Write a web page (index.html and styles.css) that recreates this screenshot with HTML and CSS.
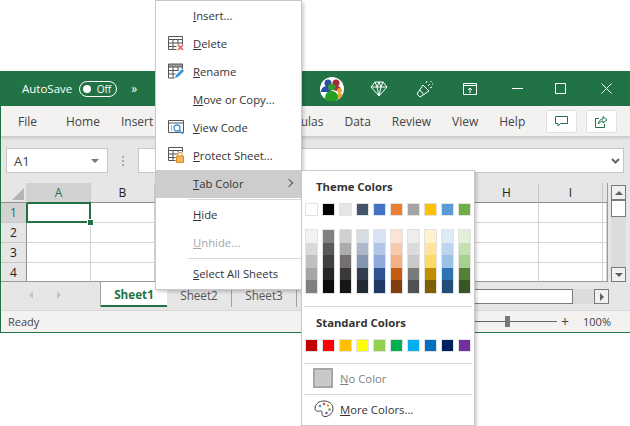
FILE: index.html
```html
<!DOCTYPE html>
<html>

<head lang="en">
    <meta charset="UTF-8">
    <title>Tab Color</title>
    <link rel="stylesheet" href="styles.css">
</head>

<body>
    <div class="window">
        <!-- title bar -->
        <div class="title-bar">
            <span class="autosave">AutoSave</span>
            <span class="toggle"><i class="toggle-dot"></i>Off</span>
            <span class="more">»</span>
            <svg class="avatar" width="24" height="24" viewBox="0 0 24 24">
                <circle cx="12" cy="12" r="12" fill="#fff"/>
                <circle cx="8" cy="6" r="3.500" fill="#2b4ea0"/>
                <circle cx="16" cy="6" r="3.500" fill="#a82a3a"/>
                <path d="M1 15c0-4 3-6 6-6s4 2 4 6z" fill="#2b4ea0"/>
                <path d="M13 13c0-3 2-4 4-4s4 1 4 4l-4 1z" fill="#a82a3a"/>
                <circle cx="19.500" cy="13.500" r="2.500" fill="#eaa52c"/>
                <path d="M16 21c0-3 2-5 3.500-5s3 1 3 3l-3 3z" fill="#eaa52c"/>
                <circle cx="11.500" cy="10" r="3.500" fill="#2f9e2f"/>
                <path d="M5 22c0-6 3-8 6.500-8s6.500 2 6.500 8l-3 2H8z" fill="#23a023"/>
            </svg>
            <svg class="title-icon diamond" width="18" height="16" viewBox="0 0 18 16" fill="none" stroke="#fff">
                <path d="M5 1h8l4 5-8 9-8-9zM1 6h16M5 1l2 5 2 9 2-9 2-5M7 6l2-5 2 5"/>
            </svg>
            <svg class="title-icon wand" width="18" height="18" viewBox="0 0 18 18" fill="none" stroke="#fff">
                <path d="M1 14l6-9 6 6-9 6zM4 10l4 5M12 6l2-2M10 3l1-2M14 8l2-1M15 1v1M17 4h-1"/>
            </svg>
            <svg class="title-icon ribbon-btn" width="14" height="12" viewBox="0 0 14 12" fill="none" stroke="#fff">
                <path d="M.5.5h13v11H.5zM.5 2.500h13M7 10V5M5 7l2-2 2 2"/>
            </svg>
            <svg class="title-icon win-min" width="11" height="11" viewBox="0 0 11 11" stroke="#fff"><path d="M0 5.500h11"/></svg>
            <svg class="title-icon win-max" width="11" height="11" viewBox="0 0 11 11" fill="none" stroke="#fff"><path d="M.5.5h10v10H.5z"/></svg>
            <svg class="title-icon win-close" width="11" height="11" viewBox="0 0 11 11" stroke="#fff"><path d="M.5.5l10 10M10.500.5l-10 10"/></svg>
        </div>

        <!-- ribbon tabs -->
        <div class="ribbon">
            <span class="tab tab-file">File</span>
            <span class="tab">Home</span>
            <span class="tab">Insert</span>
            <span class="tab-gap"></span>
            <span class="tab">Formulas</span>
            <span class="tab">Data</span>
            <span class="tab">Review</span>
            <span class="tab">View</span>
            <span class="tab">Help</span>
            <span class="ribbon-btn-box">
                <svg width="13" height="11" viewBox="0 0 13 11" fill="none" stroke="#217346"><path d="M.5.5h12v7H5.500L3 10V7.500H.5z"/></svg>
            </span>
            <span class="ribbon-btn-box">
                <svg width="13" height="13" viewBox="0 0 13 13" fill="none" stroke="#217346"><path d="M4 3.500H.5v9h9V9M3.500 9c0-3 2-5 4.500-5V1.500l4 3.500-4 3V6C6.500 6 4.500 7.500 3.500 9z"/></svg>
            </span>
        </div>

        <!-- name box and formula bar -->
        <div class="formula-row">
            <div class="name-box">A1<i class="caret-down"></i></div>
            <div class="grip"></div>
            <div class="formula-input">
                <svg width="9" height="6" viewBox="0 0 9 6" fill="none" stroke="#666" stroke-width="2"><path d="M1 1l3.500 3.500L8 1"/></svg>
            </div>
        </div>

        <!-- sheet grid and vertical scrollbar -->
        <div class="sheet-row">
            <div class="grid" id="grid">
                <i class="fill-handle"></i>
            </div>
            <div class="vscroll">
                <div class="scroll-btn"><i class="arrow-up"></i></div>
                <div class="scroll-thumb"></div>
                <div class="scroll-track"></div>
                <div class="scroll-btn"><i class="arrow-down"></i></div>
            </div>
        </div>

        <!-- sheet tabs -->
        <div class="tabs-row">
            <div class="tab-nav"><i class="nav-left"></i><i class="nav-right"></i></div>
            <div class="sheet-tab active">Sheet1</div>
            <div class="sheet-tab">Sheet2</div>
            <div class="sheet-tab">Sheet3</div>
            <div class="tabs-spacer"></div>
            <div class="hscroll">
                <div class="hscroll-thumb"></div>
                <div class="hscroll-track"></div>
                <div class="scroll-btn"><i class="arrow-right"></i></div>
            </div>
        </div>

        <!-- status bar -->
        <div class="status-bar">
            <span class="ready">Ready</span>
            <div class="zoom-slider"><i class="zoom-thumb"></i></div>
            <span class="zoom-plus">+</span>
            <span class="zoom-value">100%</span>
        </div>
    </div>

    <!-- sheet context menu -->
    <div class="menu">
        <div class="menu-item"><span class="menu-icon"></span><span><u>I</u>nsert...</span></div>
        <div class="menu-item">
            <span class="menu-icon">
                <svg width="16" height="15" viewBox="0 0 16 15" fill="none" stroke="#555"><path d="M.5.500h14v3H.5zM.5 3.500v10h8M5 3.500v10M10 3.500v5M14.500 3.500v5M.5 7h14M.5 10.500h8"/><path d="M10 9l5 5M15 9l-5 5" stroke="#e0504a" stroke-width="1.300"/></svg>
            </span>
            <span><u>D</u>elete</span>
        </div>
        <div class="menu-item">
            <span class="menu-icon">
                <svg width="16" height="16" viewBox="0 0 16 16" fill="none" stroke="#555"><path d="M.5 1h14v3H.5z" fill="#a0a0a0"/><path d="M.5 4v11h6M5 4v11M10 4v4M14.500 4v2M.5 7.500h10M.5 11h7"/><path d="M7 15l1-3 6-6 2 2-6 6z" fill="#3a96dd" stroke="none"/></svg>
            </span>
            <span><u>R</u>ename</span>
        </div>
        <div class="menu-item"><span class="menu-icon"></span><span><u>M</u>ove or Copy...</span></div>
        <div class="menu-item">
            <span class="menu-icon">
                <svg width="16" height="15" viewBox="0 0 16 15" fill="none" stroke="#555"><path d="M.5.500h15v12H.5zM.5 3h15"/><path d="M3 6h1M3 8h1M3 10h1"/><circle cx="9" cy="8" r="3" stroke="#3a96dd" stroke-width="1.300"/><path d="M11 10l4 4" stroke="#3a96dd" stroke-width="1.500"/></svg>
            </span>
            <span><u>V</u>iew Code</span>
        </div>
        <div class="menu-item">
            <span class="menu-icon">
                <svg width="16" height="16" viewBox="0 0 16 16" fill="none" stroke="#555"><path d="M.5.500h14v3H.5zM.5 3.500v10h7M5 3.500v10M10 3.500v2M14.500 3.500v2M.5 7h9M.5 10.500h7"/><path d="M10 9V7.500a2 2 0 0 1 4 0V9" stroke="#e08a1e"/><path d="M8.500 9h7v6.500h-7z" fill="#f5b25a" stroke="#e08a1e"/></svg>
            </span>
            <span><u>P</u>rotect Sheet...</span>
        </div>
        <div class="menu-item hover"><span class="menu-icon"></span><span><u>T</u>ab Color</span><i class="sub-arrow"></i></div>
        <div class="menu-sep"></div>
        <div class="menu-item"><span class="menu-icon"></span><span><u>H</u>ide</span></div>
        <div class="menu-item disabled"><span class="menu-icon"></span><span><u>U</u>nhide...</span></div>
        <div class="menu-sep"></div>
        <div class="menu-item"><span class="menu-icon"></span><span><u>S</u>elect All Sheets</span></div>
    </div>

    <!-- tab color submenu -->
    <div class="submenu">
        <div class="sub-heading">Theme Colors</div>
        <div class="swatches" id="theme"></div>
        <div class="shades" id="shades"></div>
        <div class="sub-sep"></div>
        <div class="sub-heading heading-std">Standard Colors</div>
        <div class="swatches" id="standard"></div>
        <div class="sub-sep sep-std"></div>
        <div class="sub-item disabled"><i class="no-color"></i><span><u>N</u>o Color</span></div>
        <div class="sub-sep sep-flat"></div>
        <div class="sub-item">
            <svg class="palette" width="20" height="18" viewBox="0 0 20 18" fill="none">
                <path d="M10 1C5 1 1 4 1 8.500c0 3 3 3 4.500 2.500 2-.5 3 .5 2.500 2-.5 2 1 4 4 3.500 4-.7 7-4 7-8C19 4 15 1 10 1z" stroke="#444"/>
                <circle cx="6" cy="6" r="1.300" fill="#3a96dd"/>
                <circle cx="10" cy="4" r="1.300" fill="#d0505a"/>
                <circle cx="14" cy="5.500" r="1.300" fill="#e8a030"/>
                <circle cx="15.500" cy="9.500" r="1.300" fill="#60a850"/>
                <circle cx="12.500" cy="13" r="1.300" fill="#8060b0"/>
            </svg>
            <span><u>M</u>ore Colors...</span>
        </div>
    </div>

    <script>
        var theme = ['#ffffff', '#000000', '#e7e6e6', '#44546a', '#4472c4', '#ed7d31', '#a5a5a5', '#ffc000', '#5b9bd5', '#70ad47'];
        var standard = ['#c00000', '#ff0000', '#ffc000', '#ffff00', '#92d050', '#00b050', '#00b0f0', '#0070c0', '#002060', '#7030a0'];
        var shades = [
            ['#f2f2f2', '#d9d9d9', '#bfbfbf', '#a6a6a6', '#808080'],
            ['#808080', '#595959', '#404040', '#262626', '#0d0d0d'],
            ['#d0cece', '#aeabab', '#757070', '#3b3838', '#171616'],
            ['#d6dce4', '#adb9ca', '#8496b0', '#333f4f', '#222b35'],
            ['#d9e2f3', '#b4c6e7', '#8eaadb', '#2f5496', '#1f3864'],
            ['#fbe4d5', '#f7caac', '#f4b083', '#c55a11', '#833c0b'],
            ['#ededed', '#dbdbdb', '#c9c9c9', '#7b7b7b', '#525252'],
            ['#fff2cc', '#ffe599', '#ffd966', '#bf8f00', '#7f6000'],
            ['#deeaf6', '#bdd6ee', '#9cc3e5', '#2e74b5', '#1e4e79'],
            ['#e2efd9', '#c5e0b3', '#a8d08d', '#538135', '#375623']
        ];

        function fillSwatches(id, colors) {
            var box = document.getElementById(id);
            colors.forEach(function (color) {
                var swatch = document.createElement('div');
                swatch.className = 'swatch';
                swatch.style.background = color;
                box.appendChild(swatch);
            });
        }

        fillSwatches('theme', theme);
        fillSwatches('standard', standard);

        // shade strips under the theme colors
        var shadeBox = document.getElementById('shades');
        shades.forEach(function (column) {
            var strip = document.createElement('div');
            strip.className = 'strip';
            column.forEach(function (color) {
                var cell = document.createElement('div');
                cell.style.background = color;
                strip.appendChild(cell);
            });
            shadeBox.appendChild(strip);
        });

        // grid cells: corner, column letters, then four rows
        // columns C to G sit behind the menus, so their letters stay empty
        var grid = document.getElementById('grid');
        var letters = ['A', 'B', '', '', '', '', '', 'H', 'I'];

        function addCell(className, text) {
            var cell = document.createElement('div');
            cell.className = className;
            cell.textContent = text || '';
            grid.appendChild(cell);
        }

        addCell('corner');
        for (var c = 0; c < 9; c++) {
            addCell(c === 0 ? 'col-head current' : 'col-head', letters[c]);
        }
        addCell('col-end');
        for (var r = 1; r <= 4; r++) {
            addCell(r === 1 ? 'row-head current' : 'row-head', r);
            for (var i = 0; i < 10; i++) {
                addCell(r === 1 && i === 0 ? 'cell selected' : 'cell');
            }
        }
    </script>
</body>

</html>
```
FILE: styles.css
```css
* {
    box-sizing: border-box;
}

html,
body {
    margin: 0;
    padding: 0;
    width: 630px;
    height: 426px;
    overflow: hidden;
    background: #ffffff;
    font-family: "Open Sans", "Noto Sans", sans-serif;
    font-size: 11.3px;
    color: #444444;
}

.window {
    margin-top: 71px;
    width: 630px;
    height: 262px;
    background: #e6e6e6;
    border-left: 1px solid #217346;
    border-bottom: 1px solid #217346;
    display: flex;
    flex-direction: column;
}

/* title bar */
.title-bar {
    height: 35px;
    margin-left: -1px;
    background: #217346;
    color: #ffffff;
    display: flex;
    align-items: center;
    padding-left: 22px;
}

.autosave {
    font-size: 11.5px;
}

.toggle {
    width: 38px;
    height: 16px;
    margin-left: 7px;
    border: 1px solid #ffffff;
    border-radius: 8px;
    display: flex;
    align-items: center;
    justify-content: space-between;
    padding: 0 5px 0 3px;
    font-size: 10px;
}

.toggle-dot {
    width: 8px;
    height: 8px;
    border-radius: 50%;
    background: #ffffff;
}

.more {
    margin-left: 14px;
    font-size: 12px;
}

.avatar {
    margin-left: 183px;
}

.diamond {
    margin-left: 26px;
}

.wand {
    margin-left: 28px;
}

.ribbon-btn {
    margin-left: 29px;
}

.win-min {
    margin-left: 35px;
}

.win-max {
    margin-left: 32px;
}

.win-close {
    margin-left: 35px;
}

/* ribbon tabs */
.ribbon {
    height: 30px;
    background: #f3f2f1;
    display: flex;
    align-items: center;
    padding-left: 17px;
    gap: 21px;
    font-size: 12px;
    box-shadow: 0 2px 3px rgba(0, 0, 0, .15);
    position: relative;
}

.tab-file {
    margin-right: 8px;
}

.tab-gap {
    width: 76px;
}

.ribbon-btn-box {
    width: 31px;
    height: 23px;
    background: #ffffff;
    border: 1px solid #e1dfdd;
    border-radius: 2px;
    display: flex;
    align-items: center;
    justify-content: center;
    margin-right: -12px;
}

/* formula row */
.formula-row {
    height: 47px;
    display: flex;
    align-items: flex-start;
    padding: 12px 6px 0 5px;
}

.name-box {
    width: 102px;
    height: 25px;
    background: #ffffff;
    border: 1px solid #c6c6c6;
    display: flex;
    align-items: center;
    justify-content: space-between;
    padding: 0 8px 0 7px;
    font-size: 13px;
}

.caret-down {
    border-left: 4px solid transparent;
    border-right: 4px solid transparent;
    border-top: 4px solid #777777;
}

.grip {
    width: 2px;
    height: 10px;
    margin: 8px 14px 0 14px;
    border-left: 2px dotted #aaaaaa;
}

.formula-input {
    flex: 1;
    height: 25px;
    background: #ffffff;
    border: 1px solid #c6c6c6;
    display: flex;
    align-items: center;
    justify-content: flex-end;
    padding-right: 3px;
}

/* sheet */
.sheet-row {
    height: 99px;
    display: flex;
}

.grid {
    width: 607px;
    display: grid;
    grid-template-columns: 26px repeat(9, 64px) 4px;
    grid-template-rows: 20px repeat(4, 20px);
    position: relative;
    overflow: hidden;
    border-right: 1px solid #9a9a9a;
    border-bottom: 1px solid #9a9a9a;
}

.corner {
    border-bottom: 1px solid #8f8f8f;
    border-right: 1px solid #d0d0d0;
    position: relative;
}

.corner::after {
    content: "";
    position: absolute;
    right: 2px;
    bottom: 2px;
    border-left: 12px solid transparent;
    border-bottom: 12px solid #b4b4b4;
}

.col-head {
    border-bottom: 1px solid #8f8f8f;
    border-right: 1px solid #c8c8c8;
    display: flex;
    align-items: center;
    justify-content: center;
    font-size: 12px;
    color: #222222;
}

.col-end {
    border-bottom: 1px solid #8f8f8f;
}

.col-head.current {
    background: #d2d2d2;
    color: #217346;
}

.row-head {
    border-right: 1px solid #8f8f8f;
    border-bottom: 1px solid #c8c8c8;
    display: flex;
    align-items: center;
    justify-content: center;
    font-size: 12px;
    color: #222222;
}

.row-head.current {
    background: #d2d2d2;
    color: #217346;
}

.cell {
    background: #ffffff;
    border-right: 1px solid #d4d4d4;
    border-bottom: 1px solid #d4d4d4;
}

.cell.selected {
    border: 2px solid #217346;
    margin: -1px 0 0 -1px;
}

.fill-handle {
    position: absolute;
    left: 87px;
    top: 37px;
    width: 5px;
    height: 5px;
    background: #217346;
    z-index: 1;
    outline: 1px solid #ffffff;
}

/* scrollbars */
.vscroll {
    width: 15px;
    margin: 2px 0 0 3px;
    display: flex;
    flex-direction: column;
    background: #dcdcdc;
}

.scroll-btn {
    width: 15px;
    height: 15px;
    flex: none;
    background: #f0f0f0;
    border: 1px solid #7a7a7a;
    display: flex;
    align-items: center;
    justify-content: center;
}

.scroll-thumb {
    height: 17px;
    flex: none;
    background: #ffffff;
    border: 1px solid #7a7a7a;
}

.scroll-track {
    flex: 1;
}

.arrow-up {
    border-left: 4px solid transparent;
    border-right: 4px solid transparent;
    border-bottom: 4px solid #606060;
}

.arrow-down {
    border-left: 4px solid transparent;
    border-right: 4px solid transparent;
    border-top: 4px solid #606060;
}

.arrow-right {
    border-top: 4px solid transparent;
    border-bottom: 4px solid transparent;
    border-left: 4px solid #606060;
}

/* sheet tabs */
.tabs-row {
    height: 28px;
    display: flex;
    align-items: flex-start;
    font-size: 11.7px;
}

.tab-nav {
    width: 100px;
    height: 25px;
    display: flex;
    align-items: center;
    justify-content: center;
    gap: 24px;
    padding-right: 12px;
    border-right: 1px solid #a0a0a0;
}

.nav-left {
    border-top: 4px solid transparent;
    border-bottom: 4px solid transparent;
    border-right: 4px solid #c4c4c4;
}

.nav-right {
    border-top: 4px solid transparent;
    border-bottom: 4px solid transparent;
    border-left: 4px solid #c4c4c4;
}

.sheet-tab {
    width: 65px;
    height: 24px;
    display: flex;
    align-items: center;
    justify-content: center;
    border-right: 1px solid #a0a0a0;
    color: #555555;
    margin-top: 1px;
}

.sheet-tab.active {
    width: 66px;
    height: 25px;
    margin-top: 0;
    background: #ffffff;
    border-right: 0;
    border-bottom: 2px solid #217346;
    color: #217346;
    font-weight: 700;
}

.tabs-spacer {
    flex: 1;
}

.hscroll {
    width: 200px;
    height: 15px;
    margin: 7px 21px 0 0;
    display: flex;
    flex: none;
    background: #dcdcdc;
}

.hscroll-thumb {
    width: 164px;
    background: #ffffff;
    border: 1px solid #7a7a7a;
}

.hscroll-track {
    flex: 1;
}

/* status bar */
.status-bar {
    flex: 1;
    background: #f3f2f1;
    border-top: 1px solid #d8d8d8;
    display: flex;
    align-items: center;
    padding: 0 19px 0 7px;
    font-size: 11px;
}

.ready {
    margin-right: auto;
}

.zoom-slider {
    width: 87px;
    height: 1px;
    background: #666666;
    position: relative;
}

.zoom-thumb {
    position: absolute;
    left: 35px;
    top: -5px;
    width: 5px;
    height: 11px;
    background: #777777;
}

.zoom-plus {
    margin-left: 4px;
    font-size: 14px;
}

.zoom-value {
    margin-left: 14px;
}

/* context menu */
.menu {
    position: absolute;
    left: 155px;
    top: 0;
    width: 147px;
    height: 290px;
    padding-top: 1px;
    background: #ffffff;
    border: 1px solid #c8c8c8;
    box-shadow: 2px 2px 3px rgba(0, 0, 0, .18);
    color: #333333;
    z-index: 2;
}

.menu-item {
    height: 28px;
    padding-bottom: 2px;
    display: flex;
    align-items: center;
}

.menu-icon {
    width: 37px;
    flex: none;
    display: flex;
    justify-content: center;
    padding-left: 3px;
}

.menu-item.hover {
    background: #cdcdcd;
}

.menu-item.disabled {
    color: #a6a6a6;
}

.sub-item.disabled {
    color: #7f7f7f;
}

.sub-arrow {
    margin-left: auto;
    margin-right: 9px;
    width: 6px;
    height: 6px;
    border-top: 1px solid #555555;
    border-right: 1px solid #555555;
    transform: rotate(45deg);
}

.menu-sep {
    height: 1px;
    margin: 1px 0 1px 32px;
    background: #d8d8d8;
}

/* tab color submenu */
.submenu {
    position: absolute;
    left: 301px;
    top: 170px;
    width: 174px;
    height: 256px;
    background: #ffffff;
    border: 1px solid #c8c8c8;
    box-shadow: 2px 2px 3px rgba(0, 0, 0, .18);
    color: #333333;
    z-index: 3;
}

.sub-heading {
    height: 16px;
    line-height: 16px;
    margin: 8px 0 8px 14px;
    font-weight: 700;
    color: #333333;
}

.swatches {
    display: flex;
    gap: 4px;
    padding-left: 3px;
}

.swatch {
    width: 13px;
    height: 13px;
    border: 1px solid #e2e2e2;
}

.shades {
    display: flex;
    gap: 4px;
    padding-left: 3px;
    margin-top: 13px;
}

.strip {
    width: 13px;
    height: 65px;
    border: 1px solid #e2e2e2;
    display: flex;
    flex-direction: column;
}

.strip div {
    flex: 1;
}

.sub-sep {
    height: 1px;
    margin: 12px 2px 0;
    background: #d8d8d8;
}

.heading-std {
    margin-top: 8px;
}

.sep-std {
    margin-top: 11px;
}

.sep-flat {
    margin-top: 0;
}

.sub-item {
    height: 30px;
    padding-bottom: 2px;
    display: flex;
    align-items: center;
    padding-left: 11px;
    gap: 7px;
}

.no-color {
    width: 20px;
    height: 20px;
    background: #c8c8c8;
    border: 2px solid #a6a6a6;
    outline: 1px solid #d0d0d0;
    outline-offset: -3px;
}

.palette {
    margin-left: 1px;
    margin-right: -1px;
}
```
